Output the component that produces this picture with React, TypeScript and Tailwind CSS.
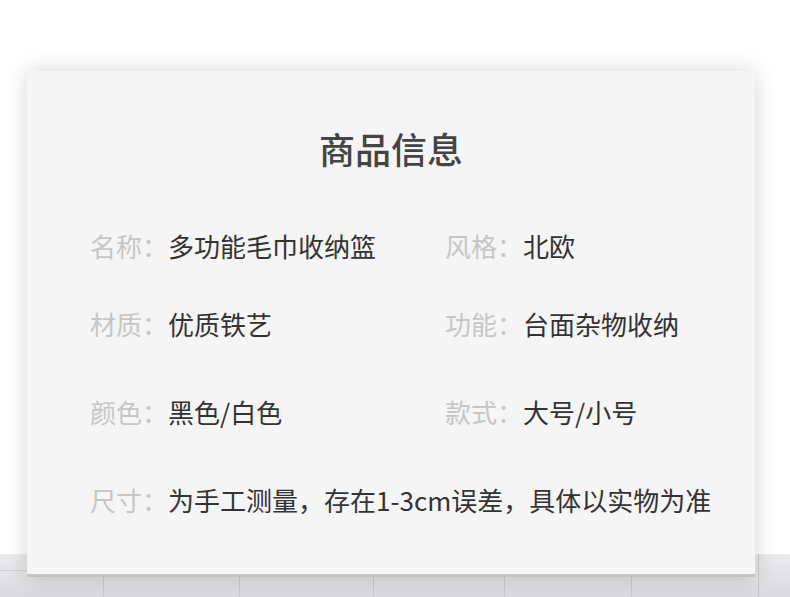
import React from 'react';

const rows: [string, string, string?, string?][] = [
  ['名称：', '多功能毛巾收纳篮', '风格：', '北欧'],
  ['材质：', '优质铁艺', '功能：', '台面杂物收纳'],
  ['颜色：', '黑色/白色', '款式：', '大号/小号'],
];

const tileLines = [103, 239, 373, 504, 631, 758];

function Field({ label, value }: { label: string; value: string }) {
  return (
    <div className="flex whitespace-nowrap">
      <span className="text-[#c6c6c6]">{label}</span>
      <span className="text-[#333333]">{value}</span>
    </div>
  );
}

export default function App() {
  return (
    <div
      className="relative w-[790px] h-[597px] overflow-hidden bg-white"
      style={{ fontFamily: '"Noto Sans CJK SC", "Noto Sans", sans-serif' }}
    >
      {/* tiled wall behind the card */}
      <div className="absolute left-0 right-0 top-[554px] bottom-0 bg-gradient-to-b from-[#ececee] to-[#d9d9dc]">
        <div className="absolute left-0 w-[27px] top-[16px] h-px bg-[#cfcfd2]" />
        {tileLines.map((x) => (
          <div key={x} className="absolute top-0 bottom-0 w-px bg-[#c9c9cc]" style={{ left: x }} />
        ))}
      </div>

      <div className="relative pt-[71px] pl-[27px]">
        <div className="w-[728px] h-[506px] bg-[#f5f5f5] border-b-[3px] border-b-[#c2c2c2] shadow-[0_0_22px_rgba(0,0,0,0.16)] flex flex-col">
          <h1 className="mt-[59px] text-center text-[36px] leading-[36px] font-medium text-[#444444]">
            商品信息
          </h1>

          <div className="pl-[63px] text-[26px] leading-[26px] flex flex-col">
            {rows.map(([l1, v1, l2, v2], i) => (
              <div
                key={l1}
                className={`flex ${i === 0 ? 'mt-[67px]' : i === 1 ? 'mt-[52px]' : 'mt-[62px]'}`}
              >
                <div className="w-[355px]">
                  <Field label={l1} value={v1} />
                </div>
                {l2 && v2 && <Field label={l2} value={v2} />}
              </div>
            ))}
            <div className="mt-[62px]">
              <Field label="尺寸：" value="为手工测量，存在1-3cm误差，具体以实物为准" />
            </div>
          </div>
        </div>
      </div>
    </div>
  );
}
